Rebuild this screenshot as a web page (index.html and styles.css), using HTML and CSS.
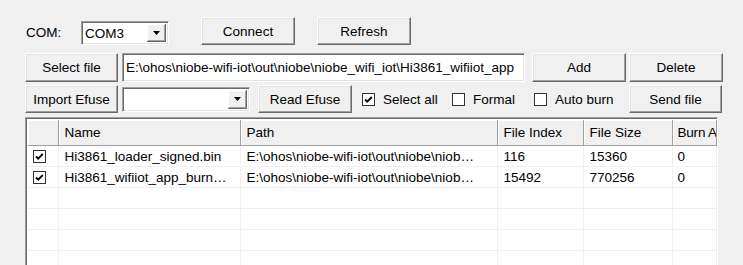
FILE: index.html
```html
<!DOCTYPE html>
<html lang="en">
<head>
    <meta charset="UTF-8">
    <title>HiBurn</title>
    <link rel="stylesheet" href="styles.css">
</head>
<body>
    <div class="app">
        <div class="row row-com">
            <span class="com-label">COM:</span>
            <div class="combo combo-com">
                <span class="combo-text">COM3</span>
                <span class="combo-btn"><svg width="7" height="4" viewBox="0 0 7 4"><polygon points="0,0 7,0 3.5,4" fill="#000"/></svg></span>
            </div>
            <button class="btn btn-connect">Connect</button>
            <button class="btn btn-refresh">Refresh</button>
        </div>

        <div class="row row-file">
            <button class="btn btn-select">Select file</button>
            <div class="field path-field">E:\ohos\niobe-wifi-iot\out\niobe\niobe_wifi_iot\Hi3861_wifiiot_app</div>
            <button class="btn btn-add">Add</button>
            <button class="btn btn-delete">Delete</button>
        </div>

        <div class="row row-efuse">
            <button class="btn btn-select">Import Efuse</button>
            <div class="combo combo-efuse">
                <span class="combo-text"></span>
                <span class="combo-btn"><svg width="7" height="4" viewBox="0 0 7 4"><polygon points="0,0 7,0 3.5,4" fill="#000"/></svg></span>
            </div>
            <button class="btn btn-read">Read Efuse</button>
            <label class="check check-all">
                <svg class="box" width="13" height="13" viewBox="0 0 13 13"><rect x="0.5" y="0.5" width="12" height="12" fill="#fff" stroke="#333"/><polyline points="3,6.5 5.2,8.7 9.8,4" fill="none" stroke="#000" stroke-width="1.8"/></svg>
                Select all
            </label>
            <label class="check check-formal">
                <svg class="box" width="13" height="13" viewBox="0 0 13 13"><rect x="0.5" y="0.5" width="12" height="12" fill="#fff" stroke="#333"/></svg>
                Formal
            </label>
            <label class="check check-auto">
                <svg class="box" width="13" height="13" viewBox="0 0 13 13"><rect x="0.5" y="0.5" width="12" height="12" fill="#fff" stroke="#333"/></svg>
                Auto burn
            </label>
            <button class="btn btn-send">Send file</button>
        </div>

        <div class="list">
            <table class="files">
                <colgroup>
                    <col class="c-check"><col class="c-name"><col class="c-path"><col class="c-index"><col class="c-size"><col class="c-burn">
                </colgroup>
                <thead>
                    <tr><th></th><th>Name</th><th>Path</th><th>File Index</th><th>File Size</th><th class="burn">Burn A</th></tr>
                </thead>
                <tbody>
                    <tr>
                        <td class="cb"><svg width="13" height="13" viewBox="0 0 13 13"><rect x="0.5" y="0.5" width="12" height="12" fill="#fff" stroke="#333"/><polyline points="3,6.5 5.2,8.7 9.8,4" fill="none" stroke="#000" stroke-width="1.8"/></svg></td>
                        <td>Hi3861_loader_signed.bin</td>
                        <td>E:\ohos\niobe-wifi-iot\out\niobe\niob…</td>
                        <td>116</td>
                        <td>15360</td>
                        <td class="burn">0</td>
                    </tr>
                    <tr>
                        <td class="cb"><svg width="13" height="13" viewBox="0 0 13 13"><rect x="0.5" y="0.5" width="12" height="12" fill="#fff" stroke="#333"/><polyline points="3,6.5 5.2,8.7 9.8,4" fill="none" stroke="#000" stroke-width="1.8"/></svg></td>
                        <td>Hi3861_wifiiot_app_burn…</td>
                        <td>E:\ohos\niobe-wifi-iot\out\niobe\niob…</td>
                        <td>15492</td>
                        <td>770256</td>
                        <td class="burn">0</td>
                    </tr>
                    <tr><td></td><td></td><td></td><td></td><td></td><td></td></tr>
                    <tr><td></td><td></td><td></td><td></td><td></td><td></td></tr>
                    <tr><td></td><td></td><td></td><td></td><td></td><td></td></tr>
                    <tr><td></td><td></td><td></td><td></td><td></td><td></td></tr>
                </tbody>
            </table>
        </div>
    </div>
</body>
</html>
```

FILE: styles.css
```css
html, body { margin: 0; height: 100%; overflow: hidden; }
body { background: #f0f0f0; color: #000; font-family: "Liberation Sans", Arial, sans-serif; font-size: 13.5px; }

.app { padding: 17px 0 0 25px; width: 698px; }
.row { display: flex; }
.row-com { height: 28px; align-items: flex-end; }
.row-file { height: 29px; margin-top: 8px; }
.row-efuse { height: 28px; margin-top: 3px; align-items: center; }

.btn { box-sizing: border-box; width: 94px; height: 100%; padding: 0; background: #f0f0f0; font: inherit; color: #000;
       border: 1px solid; border-color: #fff #696969 #696969 #fff;
       box-shadow: inset -1px -1px #a0a0a0, inset 1px 1px #e3e3e3; }
.btn-select { width: 93px; }
.btn-connect { margin-left: 32px; }
.btn-refresh { margin-left: 22px; }
.btn-add { margin-left: 7px; }
.btn-delete { margin-left: 3px; }
.btn-read { margin-left: 8px; }
.btn-send { width: 93px; margin-left: auto; margin-right: 1px; }

.com-label { width: 55px; margin-left: 1px; line-height: 24px; }

.field, .combo, .list { box-sizing: border-box; background: #fff; border: 1px solid; border-color: #a0a0a0 #fff #fff #a0a0a0;
       box-shadow: inset 1px 1px #696969, inset -1px -1px #e3e3e3; }
.path-field { width: 403px; margin-left: 4px; padding: 0 3px; line-height: 27px; white-space: nowrap; overflow: hidden; }

.combo { display: flex; align-items: stretch; padding: 2px; }
.combo-com { width: 88px; height: 24px; }
.combo-efuse { width: 128px; height: 25px; margin-left: 4px; }
.combo-text { flex: 1; padding-left: 1px; line-height: 20px; }
.combo-btn { width: 19px; display: flex; align-items: center; justify-content: center; background: #f0f0f0;
       box-shadow: inset -1px -1px #696969, inset 1px 1px #fff, inset -2px -2px #a0a0a0; }

.check { display: flex; align-items: center; gap: 8px; }
.check .box { flex: none; }
.check-all { width: 90px; margin-left: 10px; }
.check-formal { width: 82px; }

.list { width: 693px; height: 200px; margin-top: 4px; padding: 2px; overflow: hidden; }
.files { width: 689px; table-layout: fixed; border-collapse: collapse; }
.c-check { width: 30px; }
.c-name { width: 182px; }
.c-path { width: 257px; }
.c-index { width: 86px; }
.c-size { width: 89px; }
.files th, .files td { padding: 0 0 0 6px; text-align: left; font-weight: normal; white-space: nowrap; overflow: hidden; }
.files th { height: 25px; background: #f0f0f0; border-right: 1px solid #a0a0a0; border-bottom: 1px solid #a0a0a0;
       box-shadow: inset 1px 1px #fff; }
.files th.burn, .files td.burn { padding-left: 5px; letter-spacing: -0.2px; }
.files td { height: 20px; border-right: 1px solid #f0f0f0; border-bottom: 1px solid #f0f0f0; }
.files td.cb { padding-left: 5px; line-height: 0; }
```
